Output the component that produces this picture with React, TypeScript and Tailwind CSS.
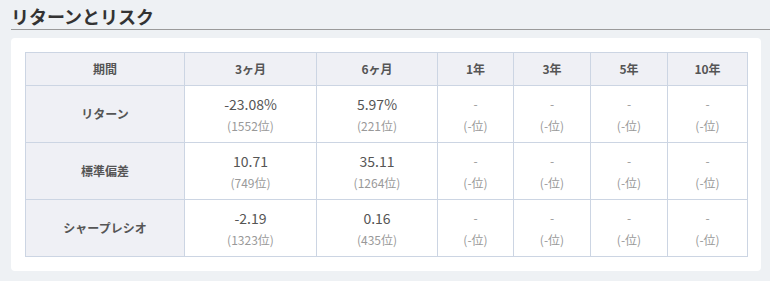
import React from 'react';

const periods = ['3ヶ月', '6ヶ月', '1年', '3年', '5年', '10年'];
const widths = ['w-[159px]', 'w-[132px]', 'w-[121px]', 'w-[76px]', 'w-[77px]', 'w-[77px]', 'w-[80px]'];

const rows = [
  { label: 'リターン', cells: [['-23.08%', '1552'], ['5.97%', '221']] },
  { label: '標準偏差', cells: [['10.71', '749'], ['35.11', '1264']] },
  { label: 'シャープレシオ', cells: [['-2.19', '1323'], ['0.16', '435']] },
];

export default function App() {
  return (
    <div
      className="h-[281px] w-[770px] bg-[#eef1f4] pl-[11px]"
      style={{ fontFamily: '"Noto Sans CJK JP", "Noto Sans", sans-serif' }}
    >
      <h2 className="h-[30px] border-b border-[#9a9a9a] pt-[1px] text-[18px] font-bold leading-[30px] text-[#333]">
        リターンとリスク
      </h2>

      <div className="mr-[9px] mt-[8px] rounded-[4px] bg-white p-[14px]">
        <table className="w-[722px] table-fixed border-collapse text-center text-[#555]">
          <colgroup>
            {widths.map((w, i) => (
              <col key={i} className={w} />
            ))}
          </colgroup>
          <thead>
            <tr className="h-[33px] bg-[#eff0f5] text-[12px] font-bold">
              <th className="border border-[#ccd5e3] font-bold">期間</th>
              {periods.map((p) => (
                <th key={p} className="border border-[#ccd5e3] font-bold">
                  {p}
                </th>
              ))}
            </tr>
          </thead>
          <tbody>
            {rows.map((row) => (
              <tr key={row.label} className="h-[57px]">
                <td className="border border-[#ccd5e3] bg-[#eff0f5] text-[12px] font-bold">{row.label}</td>
                {periods.map((p, i) => {
                  const cell = row.cells[i];
                  return (
                    <td key={p} className="border border-[#ccd5e3] pt-[1px]">
                      <div className={cell ? 'text-[14px] leading-[22px]' : 'text-[12px] leading-[22px] text-[#999]'}>
                        {cell ? cell[0] : '-'}
                      </div>
                      <div className="text-[12px] leading-[22px] text-[#999]">
                        ({cell ? cell[1] : '-'}位)
                      </div>
                    </td>
                  );
                })}
              </tr>
            ))}
          </tbody>
        </table>
      </div>
    </div>
  );
}
